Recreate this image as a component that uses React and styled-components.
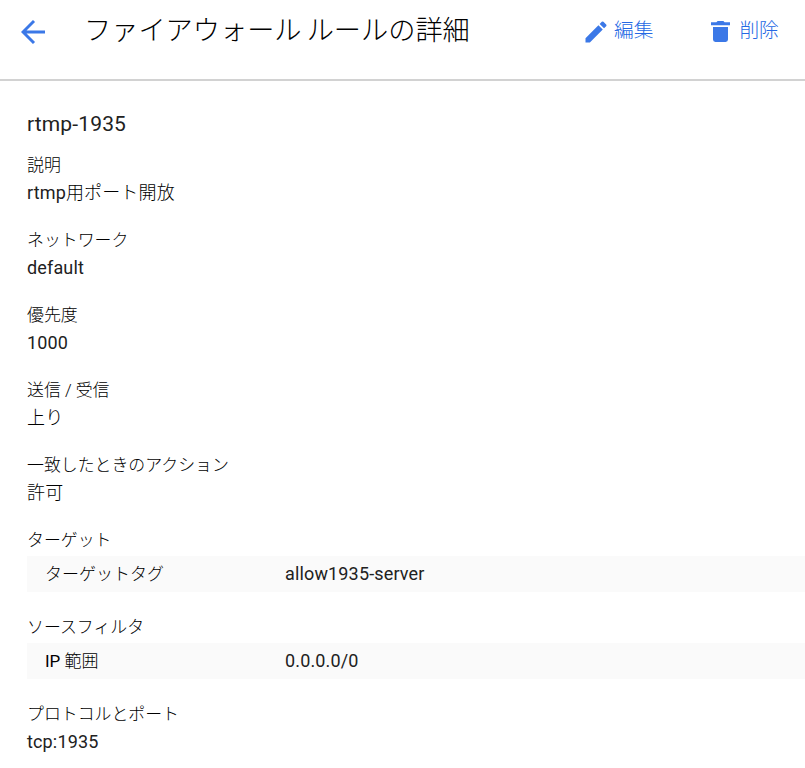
import React from 'react'
import styled, { createGlobalStyle } from 'styled-components'
import { MdEdit } from 'react-icons/md'

const sections = [
    { label: '説明', value: <>rtmp<Cjk>用ポート開放</Cjk></> },
    { label: 'ネットワーク', value: 'default' },
    { label: '優先度', value: '1000' },
    { label: '送信 / 受信', value: <Cjk>上り</Cjk> },
    { label: '一致したときのアクション', value: <Cjk>許可</Cjk> },
    { label: 'ターゲット', row: { name: <Cjk>ターゲットタグ</Cjk>, value: 'allow1935-server' } },
    { label: 'ソースフィルタ', row: { name: <>IP <Cjk>範囲</Cjk></>, value: '0.0.0.0/0' } },
    { label: 'プロトコルとポート', value: 'tcp:1935' },
]

// japanese text is one step lighter than the latin text beside it
function Cjk({ children }) {
    return <Light>{children}</Light>
}

function BackIcon() {
    return (
        <svg width="24" height="24" viewBox="0 0 24 24" fill="none" stroke="currentColor" strokeWidth="2.9">
            <path d="M24 12H2.3M13 1L2 12l11 11" />
        </svg>
    )
}

function TrashIcon() {
    return (
        <svg width="19" height="21" viewBox="0 0 19 21" fill="currentColor">
            <path d="M0 1.3h5.4L6.6 0h5.8l1.2 1.3H19v3H0zM2 6h15v12.6a2.4 2.4 0 0 1-2.4 2.4H4.4A2.4 2.4 0 0 1 2 18.6z" />
        </svg>
    )
}

function Header() {
    return (
        <HeaderBar>
            <BackButton aria-label="戻る"><BackIcon /></BackButton>
            <Title>ファイアウォール ルールの詳細</Title>
            <Action>
                <MdEdit size={28} />
                <ActionText $gap={4}>編集</ActionText>
            </Action>
            <Action $before={58}>
                <TrashIcon />
                <ActionText $gap={9}>削除</ActionText>
            </Action>
        </HeaderBar>
    )
}

function App() {
    return (
        <Page>
            <GlobalStyle />
            <Header />
            <Content>
                <RuleName>rtmp-1935</RuleName>
                {sections.map((section) => (
                    <Section key={section.label}>
                        <Label>{section.label}</Label>
                        {section.row ? (
                            <Row>
                                <RowName>{section.row.name}</RowName>
                                <RowValue>{section.row.value}</RowValue>
                            </Row>
                        ) : (
                            <Value>{section.value}</Value>
                        )}
                    </Section>
                ))}
            </Content>
        </Page>
    )
}

export default App

const GlobalStyle = createGlobalStyle`
    * {
        box-sizing: border-box;
    }
    body {
        margin: 0;
        background-color: #fff;
    }
`

const Page = styled.div`
    height: 768px;
    overflow: hidden;
    color: #212121;
    font-family: Roboto, "Noto Sans CJK JP", sans-serif;
`

const Light = styled.span`
    font-weight: 300;
    color: #000;
`

const HeaderBar = styled.header`
    display: flex;
    align-items: center;
    height: 81px;
    padding: 0 0 16px 21px;
    border-bottom: 2px solid #d2d2d2;
`

const BackButton = styled.button`
    display: flex;
    width: 63px;
    padding: 0;
    border: 0;
    background: none;
    color: #3b78e7;
`

const Title = styled.h1`
    width: 498px;
    margin: 0;
    padding-bottom: 2px;
    color: #000;
    font-size: 27.2px;
    font-weight: 300;
    line-height: 40px;
    word-spacing: -1.5px;
    white-space: nowrap;
`

const Action = styled.div`
    display: flex;
    align-items: center;
    flex-shrink: 0;
    margin-left: ${(props) => props.$before || 0}px;
    color: #3b78e7;
`

const ActionText = styled.span`
    margin-left: ${(props) => props.$gap}px;
    padding-bottom: 1px;
    color: #2468e4;
    font-size: 19.7px;
    font-weight: 300;
    line-height: 28px;
`

const Content = styled.main`
    padding: 27px 0 0 27px;
`

const RuleName = styled.h2`
    margin: 0 0 11px;
    font-size: 21px;
    font-weight: 400;
    line-height: 32px;
    letter-spacing: 0.15px;
`

const Section = styled.section`
    margin-bottom: 19px;
`

const Label = styled.div`
    font-size: 16.9px;
    font-weight: 300;
    line-height: 28px;
    color: #000;
`

const Value = styled.div`
    font-size: 18px;
    line-height: 28px;
    letter-spacing: 0.15px;
`

const Row = styled.div`
    display: flex;
    height: 36px;
    margin: 2px 0 21px;
    padding: 4px 0 0 18px;
    background-color: #fafafa;
    line-height: 28px;
`

const RowName = styled.div`
    width: 240px;
    color: #000;
    font-size: 17px;
`

const RowValue = styled.div`
    font-size: 18px;
    letter-spacing: 0.15px;
`
